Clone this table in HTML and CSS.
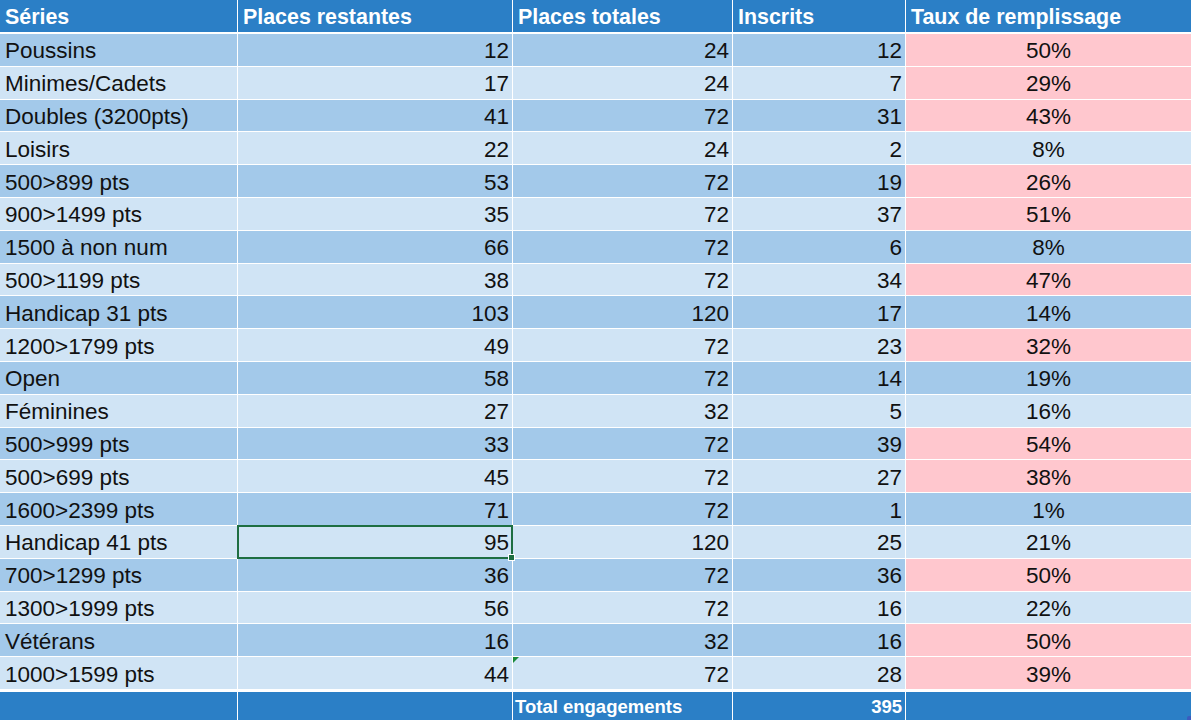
FILE: index.html
```html
<!DOCTYPE html>
<html lang="fr">
<head>
<meta charset="utf-8">
<title>Séries</title>
<link rel="stylesheet" href="styles.css">
</head>
<body>
<div class="sheet">
  <div class="c h">Séries</div>
  <div class="c h">Places restantes</div>
  <div class="c h">Places totales</div>
  <div class="c h">Inscrits</div>
  <div class="c h">Taux de remplissage</div>

  <div class="c d">Poussins</div><div class="c d n">12</div><div class="c d n">24</div><div class="c d n">12</div><div class="c p">50%</div>
  <div class="c l">Minimes/Cadets</div><div class="c l n">17</div><div class="c l n">24</div><div class="c l n">7</div><div class="c p">29%</div>
  <div class="c d">Doubles (3200pts)</div><div class="c d n">41</div><div class="c d n">72</div><div class="c d n">31</div><div class="c p">43%</div>
  <div class="c l">Loisirs</div><div class="c l n">22</div><div class="c l n">24</div><div class="c l n">2</div><div class="c l pc">8%</div>
  <div class="c d">500&gt;899 pts</div><div class="c d n">53</div><div class="c d n">72</div><div class="c d n">19</div><div class="c p">26%</div>
  <div class="c l">900&gt;1499 pts</div><div class="c l n">35</div><div class="c l n">72</div><div class="c l n">37</div><div class="c p">51%</div>
  <div class="c d">1500 à non num</div><div class="c d n">66</div><div class="c d n">72</div><div class="c d n">6</div><div class="c d pc">8%</div>
  <div class="c l">500&gt;1199 pts</div><div class="c l n">38</div><div class="c l n">72</div><div class="c l n">34</div><div class="c p">47%</div>
  <div class="c d">Handicap 31 pts</div><div class="c d n">103</div><div class="c d n">120</div><div class="c d n">17</div><div class="c d pc">14%</div>
  <div class="c l">1200&gt;1799 pts</div><div class="c l n">49</div><div class="c l n">72</div><div class="c l n">23</div><div class="c p">32%</div>
  <div class="c d">Open</div><div class="c d n">58</div><div class="c d n">72</div><div class="c d n">14</div><div class="c d pc">19%</div>
  <div class="c l">Féminines</div><div class="c l n">27</div><div class="c l n">32</div><div class="c l n">5</div><div class="c l pc">16%</div>
  <div class="c d">500&gt;999 pts</div><div class="c d n">33</div><div class="c d n">72</div><div class="c d n">39</div><div class="c p">54%</div>
  <div class="c l">500&gt;699 pts</div><div class="c l n">45</div><div class="c l n">72</div><div class="c l n">27</div><div class="c p">38%</div>
  <div class="c d">1600&gt;2399 pts</div><div class="c d n">71</div><div class="c d n">72</div><div class="c d n">1</div><div class="c d pc">1%</div>
  <div class="c l">Handicap 41 pts</div><div class="c l n sel">95</div><div class="c l n">120</div><div class="c l n">25</div><div class="c l pc">21%</div>
  <div class="c d">700&gt;1299 pts</div><div class="c d n">36</div><div class="c d n">72</div><div class="c d n">36</div><div class="c p">50%</div>
  <div class="c l">1300&gt;1999 pts</div><div class="c l n">56</div><div class="c l n">72</div><div class="c l n">16</div><div class="c l pc">22%</div>
  <div class="c d">Vétérans</div><div class="c d n">16</div><div class="c d n">32</div><div class="c d n">16</div><div class="c p">50%</div>
  <div class="c l">1000&gt;1599 pts</div><div class="c l n">44</div><div class="c l n flag">72</div><div class="c l n">28</div><div class="c p">39%</div>

  <div class="c t"></div>
  <div class="c t"></div>
  <div class="c t tl">Total engagements</div>
  <div class="c t tn">395</div>
  <div class="c t end"></div>
</div>
</body>
</html>
```

FILE: styles.css
```css
html, body {
  margin: 0;
  padding: 0;
  background: #ffffff;
}

body {
  width: 1191px;
  height: 720px;
  overflow: hidden;
  font-family: "Liberation Sans", Arial, sans-serif;
}

.sheet {
  display: grid;
  grid-template-columns: 237px 274px 219px 172px 1fr;
  grid-template-rows: 33px repeat(20, 31.8px) 30px;
  gap: 1px;
  background: #ffffff;
}

.c {
  position: relative;
  display: flex;
  align-items: center;
  padding: 3px 5px 0 5px;
  font-size: 22.5px;
  color: #111111;
  white-space: nowrap;
  overflow: visible;
}

.h {
  background: #2b7fc6;
  color: #ffffff;
  font-weight: bold;
  font-size: 21.4px;
  padding-top: 3px;
  margin-bottom: 1px;
}

.d {
  background: #a3c9ea;
}

.l {
  background: #d0e4f5;
}

.p {
  background: #ffc7ce;
  justify-content: center;
}

.pc {
  justify-content: center;
}

.n {
  justify-content: flex-end;
  padding-right: 3px;
}

.t {
  background: #2b7fc6;
  color: #ffffff;
  font-weight: bold;
  margin-top: 2px;
  font-size: 18.5px;
  padding-top: 2px;
}

.tl {
  padding-left: 2px;
}

.tn {
  justify-content: flex-end;
  padding-right: 3px;
}

.sel::after {
  content: "";
  position: absolute;
  left: -1px;
  top: -1px;
  right: -1px;
  bottom: -1px;
  border: 2px solid #1e6e42;
  pointer-events: none;
}

.sel::before {
  content: "";
  position: absolute;
  right: -3px;
  bottom: -3px;
  width: 5px;
  height: 5px;
  background: #1e6e42;
  border: 1px solid #ffffff;
  z-index: 2;
}

.flag::before {
  content: "";
  position: absolute;
  left: 0;
  top: 0;
  width: 0;
  height: 0;
  border-top: 6px solid #1a8a3a;
  border-right: 6px solid transparent;
}

.end::after {
  content: "";
  position: absolute;
  right: 0;
  bottom: 0;
  width: 4px;
  height: 4px;
  border-radius: 50% 0 0 0;
  background: #3b5bbf;
}
```
